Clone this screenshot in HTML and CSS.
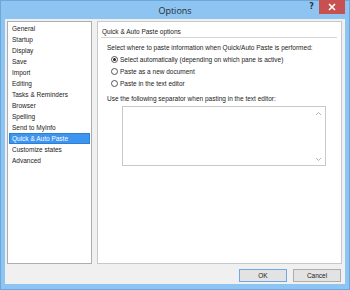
FILE: index.html
```html
<!DOCTYPE html>
<html lang="en">

<head>
    <meta charset="UTF-8">
    <title>Options</title>
    <link rel="stylesheet" href="styles.css">
</head>

<body>
    <div class="window">
        <div class="titlebar">
            <span class="title">Options</span>
            <span class="help">?</span>
            <span class="close">
                <svg width="8" height="8" viewBox="0 0 8 8">
                    <path d="M1 1 L7 7 M7 1 L1 7" stroke="#fff" stroke-width="1.6" />
                </svg>
            </span>
        </div>
        <div class="client">
            <div class="content">
                <ul class="pages">
                    <li>General</li>
                    <li>Startup</li>
                    <li>Display</li>
                    <li>Save</li>
                    <li>Import</li>
                    <li>Editing</li>
                    <li>Tasks &amp; Reminders</li>
                    <li>Browser</li>
                    <li>Spelling</li>
                    <li>Send to MyInfo</li>
                    <li class="selected">Quick &amp; Auto Paste</li>
                    <li>Customize states</li>
                    <li>Advanced</li>
                </ul>
                <div class="panel">
                    <div class="panel-title">Quick &amp; Auto Paste options</div>
                    <p class="label">Select where to paste information when Quick/Auto Paste is performed:</p>
                    <div class="radios">
                        <label class="radio"><span class="dot checked"></span>Select automatically (depending on which pane is active)</label>
                        <label class="radio"><span class="dot"></span>Paste as a new document</label>
                        <label class="radio"><span class="dot"></span>Paste in the text editor</label>
                    </div>
                    <p class="label second">Use the following separator when pasting in the text editor:</p>
                    <div class="memo">
                        <svg class="arrow up" width="7" height="5" viewBox="0 0 7 5">
                            <path d="M1 4 L3.5 1.5 L6 4" fill="none" stroke="#b5b5b5" stroke-width="1" />
                        </svg>
                        <svg class="arrow down" width="7" height="5" viewBox="0 0 7 5">
                            <path d="M1 1 L3.5 3.5 L6 1" fill="none" stroke="#b5b5b5" stroke-width="1" />
                        </svg>
                    </div>
                </div>
            </div>
            <div class="buttons">
                <button class="default">OK</button>
                <button>Cancel</button>
            </div>
        </div>
    </div>
</body>

</html>
```
FILE: styles.css
```css
body {
    margin: 0;
    padding: 0;
    font-family: "Liberation Sans", Arial, sans-serif;
    font-size: 6.5px;
    color: #222;
}

.window {
    width: 350px;
    height: 290px;
    box-sizing: border-box;
    background: #8dc4f1;
    border: 1px solid #6aa7dd;
    padding: 0 4px 5px 4px;
    display: flex;
    flex-direction: column;
}

.titlebar {
    height: 18px;
    display: flex;
    align-items: center;
    justify-content: center;
    position: relative;
}

.title {
    font-family: "Open Sans", "Liberation Sans", sans-serif;
    font-size: 9px;
    color: #2b2b2b;
}

.help {
    position: absolute;
    right: 31px;
    top: 1px;
    font-family: "DejaVu Sans", sans-serif;
    font-size: 8px;
    font-weight: bold;
    color: #333;
}

.close {
    position: absolute;
    right: 0;
    top: -1px;
    width: 26px;
    height: 14px;
    background: #c75050;
    display: flex;
    align-items: center;
    justify-content: center;
}

.client {
    flex: 1;
    background: #f0f0f0;
    padding: 2px 3px 0 2px;
    display: flex;
    flex-direction: column;
}

.content {
    display: flex;
    gap: 5px;
    height: 243px;
}

.pages {
    list-style: none;
    margin: 0;
    padding: 1px 1px;
    width: 85px;
    box-sizing: border-box;
    background: #fff;
    border: 1px solid #abadb3;
}

.pages li {
    height: 11px;
    line-height: 11px;
    padding-left: 3px;
}

.pages li.selected {
    background: #3d95ef;
    box-shadow: inset 0 0 0 1px #2d7fd6;
    color: #fff;
}

.panel {
    flex: 1;
    background: #fff;
    border: 1px solid #c8c8c8;
    padding: 6px 4px 0 3px;
}

.panel-title {
    padding: 0 0 1px 1px;
    border-bottom: 1px solid #d5d5d5;
    line-height: 8px;
}

.label {
    margin: 5px 0 0 6px;
    line-height: 9px;
}

.label.second {
    margin-top: 6px;
}

.radios {
    margin: 3px 0 0 10px;
    display: flex;
    flex-direction: column;
    gap: 3px;
}

.radio {
    display: flex;
    align-items: center;
    gap: 2px;
    line-height: 9px;
}

.dot {
    width: 7px;
    height: 7px;
    box-sizing: border-box;
    border: 1px solid #555;
    border-radius: 50%;
    background: #fff;
    display: flex;
    align-items: center;
    justify-content: center;
}

.dot.checked::after {
    content: "";
    width: 3px;
    height: 3px;
    border-radius: 50%;
    background: #222;
}

.memo {
    margin: 3px 11px 0 21px;
    height: 60px;
    box-sizing: border-box;
    border: 1px solid #c9c9c9;
    position: relative;
}

.arrow {
    position: absolute;
    right: 3px;
}

.arrow.up {
    top: 4px;
}

.arrow.down {
    bottom: 3px;
}

.buttons {
    display: flex;
    justify-content: flex-end;
    gap: 6px;
    padding: 5px 1px 0 0;
}

.buttons button {
    width: 48px;
    height: 13px;
    padding: 0;
    font-family: "Liberation Sans", Arial, sans-serif;
    font-size: 6.5px;
    color: #222;
    background: #e3e3e3;
    border: 1px solid #adadad;
}

.buttons button.default {
    border-color: #6ea8e6;
}
```
